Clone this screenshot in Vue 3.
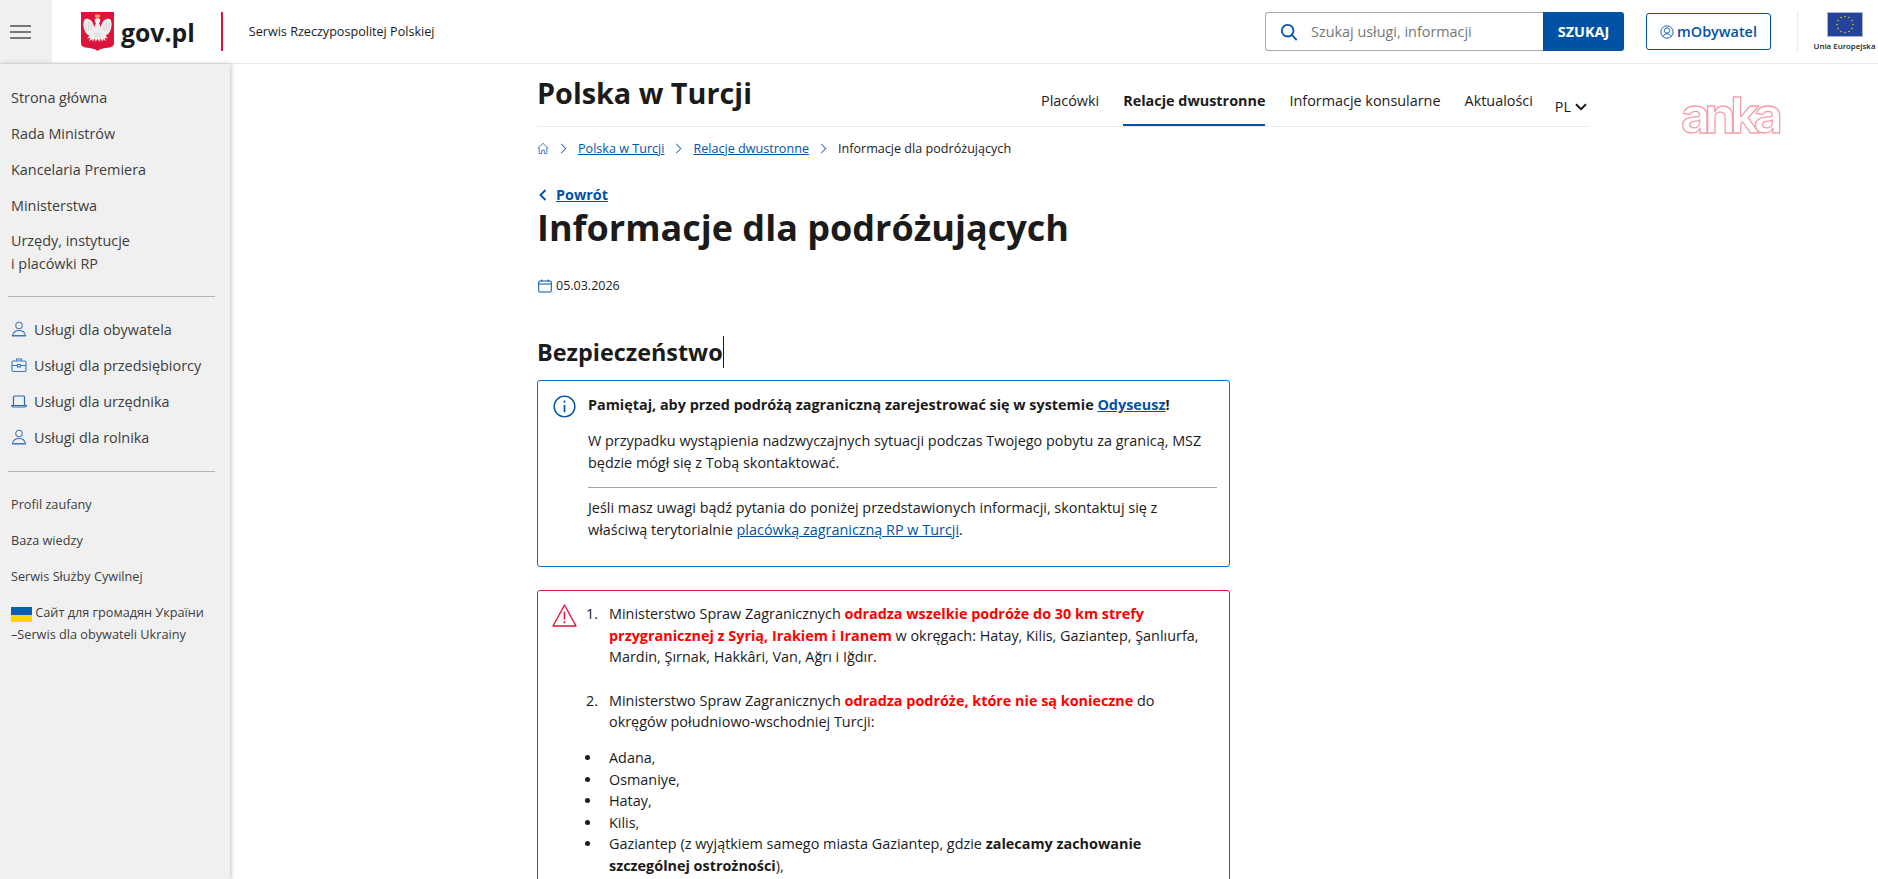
<template>
  <div class="page">
    <header class="topbar">
      <button class="burger" aria-label="Menu">
        <span></span><span></span><span></span>
      </button>
      <div class="brand">
        <svg class="emblem" viewBox="0 0 33 39">
          <path d="M0 0h33v31c0 3-2 4.300-6 4.800-4 .5-8 .8-10.500 3.200-2.500-2.400-6.500-2.700-10.500-3.200-4-.5-6-1.800-6-4.800z" fill="#dc143c" />
          <path d="M16.500 1.500l1.200 1.700 1.600-1-.6 3.300h-4.400l-.6-3.300 1.600 1z" fill="#eab54e" />
          <path d="M16.500 6c-1.700 0-2.800 1-2.800 2.500 0 1.300 1 2 1.200 3.200-1 1.300-1.400 2.500-1.500 4-.7-2.500-1.500-5.500-3.300-7.200-2.300-2-5.500-2.400-6.700-.8-1.500 2.200-1.200 6.500-.2 9.800.9 2.800 2.700 5 5 6l-2 3 3-.7-1 3.400 3-2.300.5 2.800 2.300-3.200.6 3.500 1.900-3 1.900 3 .6-3.500 2.300 3.200.5-2.800 3 2.300-1-3.400 3 .7-2-3c2.300-1 4.100-3.200 5-6 1-3.300 1.300-7.600-.2-9.800-1.200-1.600-4.400-1.200-6.700.8-1.800 1.700-2.600 4.700-3.300 7.200-.1-1.500-.5-2.700-1.500-4 .2-1.200 1.200-1.900 1.200-3.200 0-1.500-1.100-2.500-2.800-2.500z" fill="#efefef" />
          <path d="M5 11v8M7.500 10v9M10 11v7M28 11v8M25.500 10v9M23 11v7M13 24l7 0M12.500 21.500h8" stroke="#c9c9c9" stroke-width=".7" fill="none" />
        </svg>
        <span class="brand-name">gov.pl</span>
      </div>
      <span class="brand-line"></span>
      <span class="brand-sub">Serwis Rzeczypospolitej Polskiej</span>
      <div class="top-right">
        <form class="search" @submit.prevent>
          <div class="search-field">
            <svg class="search-ico" viewBox="0 0 20 20" fill="none" stroke="#0052a5" stroke-width="2">
              <circle cx="8.500" cy="8.500" r="6.500" />
              <path d="M13 13l5.500 6" />
            </svg>
            <input type="text" placeholder="Szukaj usługi, informacji" />
          </div>
          <button class="search-btn">SZUKAJ</button>
        </form>
        <a class="mobywatel">
          <svg class="mob-ico" viewBox="0 0 16 16" fill="none" stroke="#0052a5" stroke-width="1">
            <circle cx="8" cy="8" r="7" />
            <circle cx="8" cy="6.300" r="3" />
            <path d="M3.500 13.200c1-2 2.700-3.200 4.500-3.200s3.500 1.200 4.500 3.200" />
          </svg>
          mObywatel
        </a>
        <div class="eu">
          <svg class="eu-flag" viewBox="0 0 36 25">
            <rect width="36" height="25" fill="#24439b" />
            <circle v-for="s in euStars" :key="s.k" :cx="s.x" :cy="s.y" r=".75" fill="#f5d90a" />
          </svg>
          <span class="eu-text">Unia Europejska</span>
        </div>
      </div>
    </header>

    <div class="layout">
      <aside class="side">
        <nav class="side-main">
          <a v-for="i in mainLinks" :key="i">{{ i }}</a>
          <a class="two-line">Urzędy, instytucje<br />i placówki RP</a>
        </nav>
        <hr class="side-rule" />
        <nav class="side-services">
          <a v-for="i in services" :key="i.text">
            <svg v-if="i.icon === 'person'" viewBox="0 0 16 16" fill="none" stroke="#3b78bd" stroke-width="1.100">
              <circle cx="8" cy="4.500" r="3.200" />
              <path d="M1.500 14.500c.6-3 3-5 6.500-5s5.900 2 6.500 5zM1 15h14" />
            </svg>
            <svg v-else-if="i.icon === 'case'" viewBox="0 0 16 16" fill="none" stroke="#3b78bd" stroke-width="1.100">
              <rect x="1" y="4" width="14" height="10.500" rx="1" />
              <path d="M5.500 4V2h5v2M1 8.500h5.500M9.500 8.500H15" />
              <rect x="6.500" y="7.500" width="3" height="2.500" />
            </svg>
            <svg v-else viewBox="0 0 16 16" fill="none" stroke="#2a68ad" stroke-width="1.200">
              <path d="M2.500 12V4c0-.6.400-1 1-1h9c.6 0 1 .4 1 1v8" />
              <path d="M.7 12.500h14.600c0 1-.5 1.500-1.300 1.500H2c-.8 0-1.300-.5-1.300-1.500z" />
            </svg>
            {{ i.text }}
          </a>
        </nav>
        <hr class="side-rule second" />
        <nav class="side-small">
          <a v-for="i in smallLinks" :key="i">{{ i }}</a>
          <a class="ua">
            <span class="flag"><i></i><i></i></span> Сайт для громадян України<br />–Serwis dla obywateli Ukrainy
          </a>
        </nav>
      </aside>

      <main class="main">
        <div class="column">
          <div class="site-head">
            <h2 class="site-title">Polska w Turcji</h2>
            <nav class="tabs">
              <a>Placówki</a>
              <a class="active">Relacje dwustronne</a>
              <a>Informacje konsularne</a>
              <a>Aktualości</a>
              <span class="lang">PL
                <svg viewBox="0 0 12 8" fill="none" stroke="#1b1b1b" stroke-width="2"><path d="M1 1.200l5 5 5-5" /></svg>
              </span>
            </nav>
          </div>

          <div class="crumbs">
            <svg class="home" viewBox="0 0 14 14" fill="none" stroke="#2a68ad" stroke-width="1">
              <path d="M.8 7L7 1l6.200 6M2.500 6v7h3V9h3v4h3V6" />
            </svg>
            <span class="sep"></span>
            <a>Polska w Turcji</a>
            <span class="sep"></span>
            <a>Relacje dwustronne</a>
            <span class="sep"></span>
            <span>Informacje dla podróżujących</span>
          </div>

          <div class="article">
            <a class="back">
              <svg viewBox="0 0 8 12" fill="none" stroke="#0052a5" stroke-width="1.800"><path d="M6.500 1L1.500 6l5 5" /></svg>
              <span>Powrót</span>
            </a>
            <h1>Informacje dla podróżujących</h1>
            <div class="date">
              <svg viewBox="0 0 14 14" fill="none" stroke="#0052a5" stroke-width="1">
                <rect x=".7" y="2" width="12.600" height="11" rx="1" />
                <path d="M.7 5h12.600M3.800 .5V3M10.200 .5V3" />
              </svg>
              05.03.2026
            </div>
            <h3 class="section"><span>Bezpieczeństwo</span></h3>

            <section class="box info">
              <svg class="box-ico" viewBox="0 0 24 24" fill="none" stroke="#0052a5" stroke-width="1.500">
                <circle cx="12" cy="12" r="10.800" />
                <path d="M12 10.500v7.500" stroke-width="1.800" />
                <circle cx="12" cy="6.900" r="1.100" fill="#0052a5" stroke="none" />
              </svg>
              <div class="box-body">
                <p class="lead">Pamiętaj, aby przed podróżą zagraniczną zarejestrować się w systemie <a>Odyseusz</a>!</p>
                <p>W przypadku wystąpienia nadzwyczajnych sytuacji podczas Twojego pobytu za granicą, MSZ będzie mógł się z Tobą skontaktować.</p>
                <hr />
                <p>Jeśli masz uwagi bądź pytania do poniżej przedstawionych informacji, skontaktuj się z właściwą terytorialnie <a class="plain">placówką zagraniczną RP w Turcji</a>.</p>
              </div>
            </section>

            <section class="box warn">
              <svg class="box-ico" viewBox="0 0 25 23" fill="none" stroke="#dc143c" stroke-width="1.400" stroke-linejoin="round">
                <path d="M12.500 1L1 22h23z" />
                <path d="M12.500 7.500v8" stroke-width="1.500" />
                <circle cx="12.500" cy="18.300" r="1" fill="#dc143c" stroke="none" />
              </svg>
              <div class="box-body">
                <ol>
                  <li>Ministerstwo Spraw Zagranicznych <b class="red">odradza wszelkie podróże do 30 km strefy przygranicznej z Syrią, Irakiem i Iranem</b> w okręgach: Hatay, Kilis, Gaziantep, Şanlıurfa, Mardin, Şırnak, Hakkâri, Van, Ağrı i Iğdır.</li>
                  <li>Ministerstwo Spraw Zagranicznych <b class="red">odradza podróże, które nie są konieczne</b> do okręgów południowo-wschodniej Turcji:</li>
                </ol>
                <ul>
                  <li>Adana,</li>
                  <li>Osmaniye,</li>
                  <li>Hatay,</li>
                  <li>Kilis,</li>
                  <li>Gaziantep (z wyjątkiem samego miasta Gaziantep, gdzie <b>zalecamy zachowanie szczególnej ostrożności</b>),</li>
                </ul>
              </div>
            </section>
          </div>
        </div>
        <span class="anka">anka</span>
      </main>
    </div>
  </div>
</template>

<script setup>
const mainLinks = ["Strona główna", "Rada Ministrów", "Kancelaria Premiera", "Ministerstwa"];
const services = [
  { text: "Usługi dla obywatela", icon: "person" },
  { text: "Usługi dla przedsiębiorcy", icon: "case" },
  { text: "Usługi dla urzędnika", icon: "laptop" },
  { text: "Usługi dla rolnika", icon: "person" },
];
const smallLinks = ["Profil zaufany", "Baza wiedzy", "Serwis Służby Cywilnej"];
const euStars = Array.from({ length: 12 }, (_, k) => ({
  k,
  x: 18 + 8 * Math.sin((k * Math.PI) / 6),
  y: 12.5 - 8 * Math.cos((k * Math.PI) / 6),
}));
</script>

<style>
html,
body {
  margin: 0;
  background: #fff;
}
</style>

<style scoped>
.page {
  height: 879px;
  overflow: hidden;
  font-family: "Open Sans", "Noto Sans", sans-serif;
  font-size: 14.4px;
  color: #1b1b1b;
  background: #fff;
}
.topbar {
  height: 63px;
  display: flex;
  align-items: center;
  border-bottom: 1px solid #ebebeb;
}
.burger {
  width: 52px;
  height: 63px;
  background: #f0f0f0;
  border: 0;
  padding: 0 0 0 10px;
  display: flex;
  flex-direction: column;
  align-items: flex-start;
  justify-content: center;
  gap: 4px;
}
.burger span {
  width: 21px;
  height: 2px;
  background: #767676;
}
.brand {
  margin-left: 29px;
  display: flex;
  align-items: center;
  gap: 7px;
}
.emblem {
  width: 33px;
  height: 39px;
}
.brand-name {
  font-size: 24.8px;
  font-weight: 700;
  color: #1b1b1b;
}
.brand-line {
  width: 2px;
  height: 39px;
  background: #dc143c;
  margin-left: 26px;
}
.brand-sub {
  margin-left: 26px;
  font-size: 12.6px;
}
.top-right {
  margin-left: auto;
  display: flex;
  align-items: center;
}
.search {
  display: flex;
  height: 39px;
}
.search-field {
  width: 278px;
  border: 1px solid #ababab;
  border-right: 0;
  border-radius: 3px 0 0 3px;
  display: flex;
  align-items: center;
  box-sizing: border-box;
  padding-left: 14px;
  gap: 13px;
}
.search-ico {
  width: 18px;
  height: 18px;
  flex: none;
}
.search-field input {
  border: 0;
  outline: 0;
  flex: 1;
  min-width: 0;
  font: inherit;
  padding: 0;
}
.search-field input::placeholder {
  color: #767676;
}
.search-btn {
  width: 81px;
  background: #0052a5;
  color: #fff;
  border: 0;
  border-radius: 0 3px 3px 0;
  font: 700 14.4px "Open Sans", sans-serif;
  padding: 0;
}
.mobywatel {
  margin-left: 22px;
  width: 125px;
  height: 37px;
  box-sizing: border-box;
  border: 1px solid #0052a5;
  border-radius: 3px;
  color: #0052a5;
  font-weight: 600;
  display: flex;
  align-items: center;
  justify-content: center;
  gap: 3px;
}
.mob-ico {
  width: 14px;
  height: 14px;
}
.eu {
  margin-left: 26px;
  width: 81px;
  height: 41px;
  box-sizing: border-box;
  padding-left: 13px;
  border-left: 1px solid #ebebeb;
  display: flex;
  flex-direction: column;
  align-items: center;
}
.eu-flag {
  width: 36px;
  height: 25px;
  display: block;
  outline: 1px solid #a9b3d3;
  outline-offset: -1px;
  margin-top: 1px;
}
.eu-text {
  font-size: 7.9px;
  font-weight: 600;
  margin-top: 4px;
  white-space: nowrap;
}
.layout {
  display: flex;
  height: 815px;
}
.side {
  width: 230px;
  flex: none;
  background: #f0f0f0;
  box-shadow: 1px 0 4px rgba(0, 0, 0, 0.25);
  padding-top: 22px;
  box-sizing: border-box;
  color: #3d3d3d;
}
.side a {
  display: block;
}
.side-main a {
  padding: 0 11px;
  line-height: 24px;
  margin-bottom: 12px;
}
.side-main a.two-line {
  line-height: 22.5px;
  margin-bottom: 0;
}
.side-rule {
  border: 0;
  border-top: 1px solid #b5b5b5;
  margin: 21px 15px 20px 8px;
}
.side-services a {
  display: flex;
  align-items: center;
  gap: 7px;
  padding: 0 11px;
  height: 24px;
  margin-bottom: 12px;
}
.side-services svg {
  width: 16px;
  height: 16px;
  flex: none;
}
.side-rule.second {
  margin-top: 22px;
  margin-bottom: 20px;
}
.side-small a {
  padding: 0 11px;
  font-size: 12.7px;
  line-height: 24px;
  margin-bottom: 12px;
}
.side-small a.ua {
  line-height: 22px;
  margin-top: 13px;
}
.flag {
  display: inline-flex;
  flex-direction: column;
  width: 21px;
  height: 15px;
  vertical-align: 2px;
}
.flag i {
  flex: 8;
  background: #0a5cb8;
}
.flag i + i {
  flex: 7;
  background: #ffd500;
}
.main {
  flex: 1;
  position: relative;
  padding-left: 307px;
  box-sizing: border-box;
}
.column {
  width: 1052px;
}
.site-head {
  display: flex;
  justify-content: space-between;
  align-items: flex-end;
  height: 62px;
  border-bottom: 1px solid #ebebeb;
}
.site-title {
  font-size: 28.8px;
  font-weight: 700;
  margin: 0;
  align-self: flex-start;
  padding-top: 9px;
}
.tabs {
  display: flex;
  align-items: center;
  height: 62px;
}
.tabs a {
  height: 62px;
  box-sizing: border-box;
  padding-top: 27px;
  margin-left: 24px;
  border-bottom: 2px solid transparent;
}
.tabs a.active {
  font-weight: 700;
  border-bottom-color: #0052a5;
}
.lang {
  margin: 0 2px 0 22px;
  padding-top: 23px;
  display: flex;
  align-items: center;
  gap: 4px;
}
.lang svg {
  width: 12px;
  height: 8px;
}
.crumbs {
  display: flex;
  align-items: center;
  font-size: 12.6px;
  height: 20px;
  margin-top: 11px;
}
.crumbs a {
  color: #0052a5;
  text-decoration: underline;
}
.home {
  width: 12px;
  height: 13px;
}
.sep {
  width: 6px;
  height: 6px;
  border-top: 1px solid #3b78bd;
  border-right: 1px solid #3b78bd;
  transform: rotate(45deg);
  margin: 0 13px 0 9px;
}
.article {
  width: 693px;
}
.back {
  display: flex;
  align-items: center;
  gap: 9px;
  color: #0052a5;
  font-weight: 700;
  margin-top: 27px;
  line-height: 20px;
}
.back span {
  text-decoration: underline;
}
.back svg {
  width: 8px;
  height: 12px;
  margin-left: 2px;
}
h1 {
  font-size: 36px;
  line-height: 46px;
  font-weight: 700;
  margin: 0;
}
.date {
  display: flex;
  align-items: center;
  gap: 4px;
  font-size: 12.5px;
  margin-top: 26px;
}
.date svg {
  width: 14px;
  height: 14px;
  margin-left: 1px;
}
.section {
  font-size: 23.4px;
  font-weight: 700;
  margin: 42px 0 12px;
  line-height: 32px;
}
.section span {
  border-right: 1px solid #1b1b1b;
}
.box {
  border-radius: 3px;
  box-sizing: border-box;
  display: flex;
  line-height: 21.6px;
}
.box p {
  margin: 0;
}
.box a {
  color: #0052a5;
  font-weight: 700;
  text-decoration: underline;
}
.box a.plain {
  font-weight: 400;
}
.info {
  border: 1px solid #0b6fca;
  height: 187px;
  padding: 13px 12px 0 15px;
  gap: 12px;
}
.info .box-ico {
  width: 23px;
  height: 23px;
}
.warn {
  border: 1px solid #dc143c;
  margin-top: 23px;
  padding: 12px 12px 16px 14px;
  gap: 11px;
}
.warn .box-ico {
  width: 25px;
  height: 23px;
}
.box-ico {
  flex: none;
  margin-top: 1px;
}
.box-body {
  flex: 1;
  min-width: 0;
}
.lead {
  font-weight: 700;
  margin-bottom: 14.4px !important;
}
.box hr {
  border: 0;
  border-top: 1px solid #a5a5a5;
  margin: 14px 0 9px;
}
.red {
  color: #f00;
}
ol,
ul {
  list-style: none;
  margin: 0;
  padding: 0 6px 0 21px;
}
ol {
  counter-reset: num;
}
ol li,
ul li {
  position: relative;
}
ol li {
  counter-increment: num;
  margin-bottom: 22px;
}
ol li::before {
  content: counter(num) ".";
  position: absolute;
  left: -23px;
}
ul {
  margin-top: 14px;
}
ul li::before {
  content: "";
  position: absolute;
  left: -24px;
  top: 8px;
  width: 5px;
  height: 5px;
  border-radius: 50%;
  background: #1b1b1b;
}
ol li:last-child {
  margin-bottom: 0;
}
.anka {
  position: absolute;
  top: 21px;
  left: 1451px;
  font-family: Inter, "Open Sans", sans-serif;
  font-size: 50px;
  line-height: 60px;
  font-weight: 700;
  letter-spacing: -5.5px;
  color: #fff;
  -webkit-text-stroke: 1.3px #f4a0a8;
}
</style>
